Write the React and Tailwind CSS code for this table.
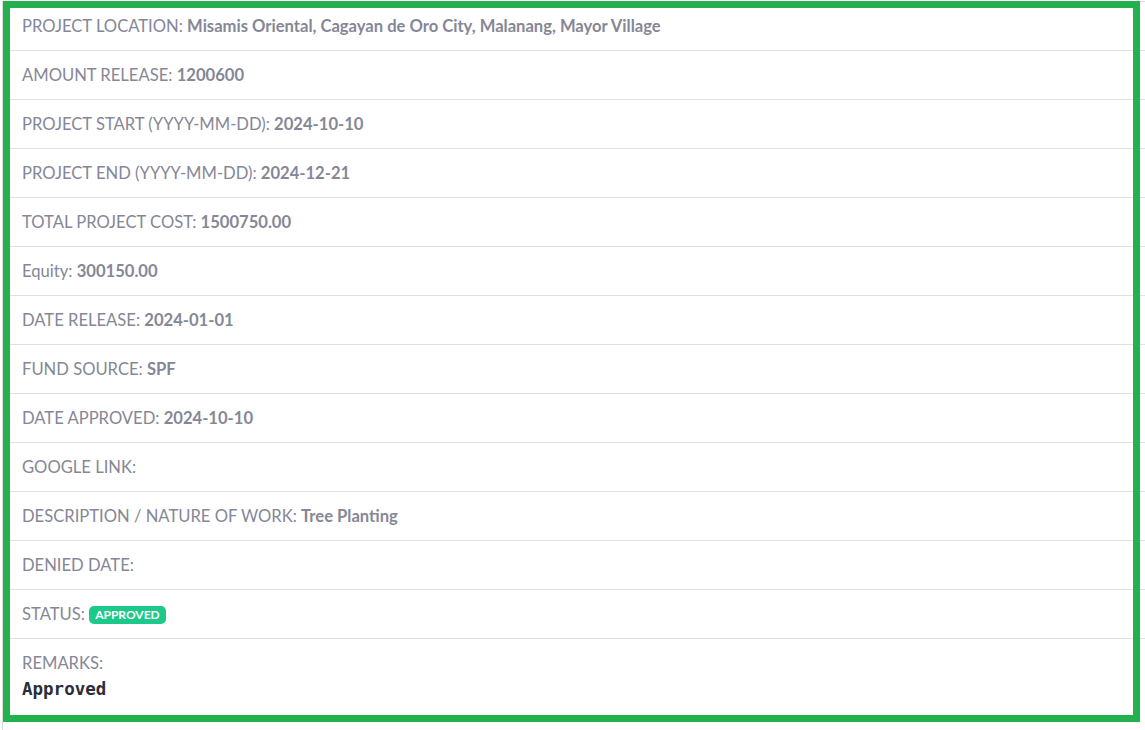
import React from "react";

const rows = [
  { label: "PROJECT LOCATION", value: "Misamis Oriental, Cagayan de Oro City, Malanang, Mayor Village" },
  { label: "AMOUNT RELEASE", value: "1200600" },
  { label: "PROJECT START (YYYY-MM-DD)", value: "2024-10-10" },
  { label: "PROJECT END (YYYY-MM-DD)", value: "2024-12-21" },
  { label: "TOTAL PROJECT COST", value: "1500750.00" },
  { label: "Equity", value: "300150.00" },
  { label: "DATE RELEASE", value: "2024-01-01" },
  { label: "FUND SOURCE", value: "SPF" },
  { label: "DATE APPROVED", value: "2024-10-10" },
  { label: "GOOGLE LINK", value: "" },
  { label: "DESCRIPTION / NATURE OF WORK", value: "Tree Planting" },
  { label: "DENIED DATE", value: "" },
];

const DetailRow = ({ label, children }) => (
  <li className="h-[49px] border-b border-[#e0e0e0] pl-[19px] pr-5 py-3 leading-6">
    {label}: {children}
  </li>
);

export default function App() {
  return (
    <div className="w-[1145px] h-[730px] overflow-hidden bg-white pl-[2px] pt-[1px]">
      <div
        className="relative w-[1200px] border-l border-t border-[#dcdcdc] text-[16.6px] text-[#858796]"
        style={{ fontFamily: "Lato, 'Noto Sans', sans-serif" }}
      >
        <ul>
          {rows.map((row) => (
            <DetailRow key={row.label} label={row.label}>
              {row.value && <b className="font-bold">{row.value}</b>}
            </DetailRow>
          ))}
          <DetailRow label="STATUS">
            <span className="inline-block rounded-[5px] bg-[#1cc88a] px-[6px] text-[12px] font-bold leading-[18px] text-white align-[1px]">
              APPROVED
            </span>
          </DetailRow>
          <li className="pl-[19px] pr-5 pt-3 pb-10 leading-6">
            <div>REMARKS:</div>
            <pre
              className="mt-[2px] text-[17.5px] font-bold leading-6 text-[#2b2d38]"
              style={{ fontFamily: "'DejaVu Sans Mono', monospace" }}
            >
              Approved
            </pre>
          </li>
        </ul>
        <div className="pointer-events-none absolute left-0 top-[-1px] h-[721px] w-[1137px] border-[7px] border-[#22b14c]" />
      </div>
    </div>
  );
}
